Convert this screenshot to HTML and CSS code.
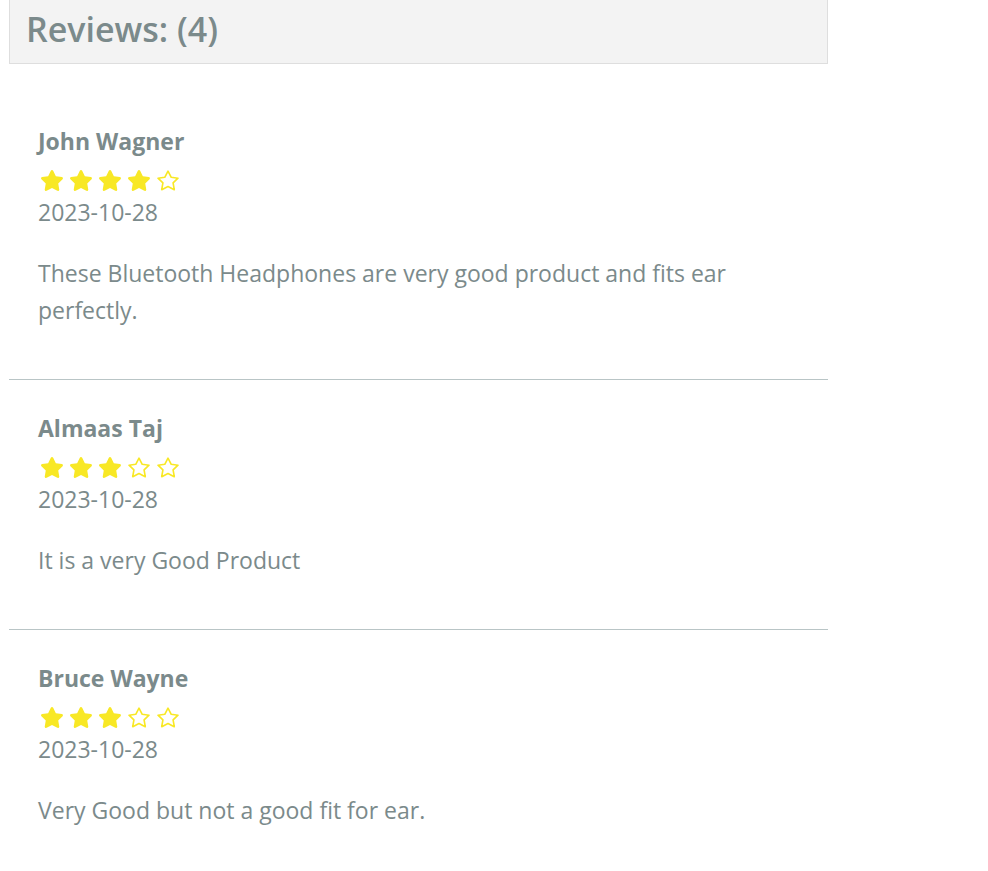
FILE: index.html
```html
<!DOCTYPE html>
<html>
<head>
<meta charset="utf-8">
<link rel="stylesheet" href="styles.css">
</head>
<body>
<div class="reviews">
  <h2 class="reviews-title">Reviews: (4)</h2>
  <div class="review">
    <strong class="review-name">John Wagner</strong>
    <div class="stars">
      <svg class="star" viewBox="0 0 576 512"><path d="M259.3 17.8L194 150.2 47.9 171.5c-26.2 3.8-36.7 36.1-17.7 54.6l105.7 103-25 145.5c-4.5 26.3 23.2 46 46.4 33.7L288 439.6l130.7 68.7c23.2 12.2 50.9-7.4 46.4-33.7l-25-145.5 105.7-103c19-18.5 8.5-50.8-17.7-54.6L382 150.2 316.7 17.8c-11.7-23.6-45.6-23.9-57.4 0z"/></svg>
      <svg class="star" viewBox="0 0 576 512"><path d="M259.3 17.8L194 150.2 47.9 171.5c-26.2 3.8-36.7 36.1-17.7 54.6l105.7 103-25 145.5c-4.5 26.3 23.2 46 46.4 33.7L288 439.6l130.7 68.7c23.2 12.2 50.9-7.4 46.4-33.7l-25-145.5 105.7-103c19-18.5 8.5-50.8-17.7-54.6L382 150.2 316.7 17.8c-11.7-23.6-45.6-23.9-57.4 0z"/></svg>
      <svg class="star" viewBox="0 0 576 512"><path d="M259.3 17.8L194 150.2 47.9 171.5c-26.2 3.8-36.7 36.1-17.7 54.6l105.7 103-25 145.5c-4.5 26.3 23.2 46 46.4 33.7L288 439.6l130.7 68.7c23.2 12.2 50.9-7.4 46.4-33.7l-25-145.5 105.7-103c19-18.5 8.5-50.8-17.7-54.6L382 150.2 316.7 17.8c-11.7-23.6-45.6-23.9-57.4 0z"/></svg>
      <svg class="star" viewBox="0 0 576 512"><path d="M259.3 17.8L194 150.2 47.9 171.5c-26.2 3.8-36.7 36.1-17.7 54.6l105.7 103-25 145.5c-4.5 26.3 23.2 46 46.4 33.7L288 439.6l130.7 68.7c23.2 12.2 50.9-7.4 46.4-33.7l-25-145.5 105.7-103c19-18.5 8.5-50.8-17.7-54.6L382 150.2 316.7 17.8c-11.7-23.6-45.6-23.9-57.4 0z"/></svg>
      <svg class="star star-empty" viewBox="0 0 576 512"><path d="M288 30 L367 178 L532 200 L412 316 L441 481 L288 403 L135 481 L164 316 L44 200 L209 178 Z"/></svg>
    </div>
    <p class="review-date">2023-10-28</p>
    <p class="review-text">These Bluetooth Headphones are very good product and fits ear perfectly.</p>
  </div>
  <div class="review">
    <strong class="review-name">Almaas Taj</strong>
    <div class="stars">
      <svg class="star" viewBox="0 0 576 512"><path d="M259.3 17.8L194 150.2 47.9 171.5c-26.2 3.8-36.7 36.1-17.7 54.6l105.7 103-25 145.5c-4.5 26.3 23.2 46 46.4 33.7L288 439.6l130.7 68.7c23.2 12.2 50.9-7.4 46.4-33.7l-25-145.5 105.7-103c19-18.5 8.5-50.8-17.7-54.6L382 150.2 316.7 17.8c-11.7-23.6-45.6-23.9-57.4 0z"/></svg>
      <svg class="star" viewBox="0 0 576 512"><path d="M259.3 17.8L194 150.2 47.9 171.5c-26.2 3.8-36.7 36.1-17.7 54.6l105.7 103-25 145.5c-4.5 26.3 23.2 46 46.4 33.7L288 439.6l130.7 68.7c23.2 12.2 50.9-7.4 46.4-33.7l-25-145.5 105.7-103c19-18.5 8.5-50.8-17.7-54.6L382 150.2 316.7 17.8c-11.7-23.6-45.6-23.9-57.4 0z"/></svg>
      <svg class="star" viewBox="0 0 576 512"><path d="M259.3 17.8L194 150.2 47.9 171.5c-26.2 3.8-36.7 36.1-17.7 54.6l105.7 103-25 145.5c-4.5 26.3 23.2 46 46.4 33.7L288 439.6l130.7 68.7c23.2 12.2 50.9-7.4 46.4-33.7l-25-145.5 105.7-103c19-18.5 8.5-50.8-17.7-54.6L382 150.2 316.7 17.8c-11.7-23.6-45.6-23.9-57.4 0z"/></svg>
      <svg class="star star-empty" viewBox="0 0 576 512"><path d="M288 30 L367 178 L532 200 L412 316 L441 481 L288 403 L135 481 L164 316 L44 200 L209 178 Z"/></svg>
      <svg class="star star-empty" viewBox="0 0 576 512"><path d="M288 30 L367 178 L532 200 L412 316 L441 481 L288 403 L135 481 L164 316 L44 200 L209 178 Z"/></svg>
    </div>
    <p class="review-date">2023-10-28</p>
    <p class="review-text">It is a very Good Product</p>
  </div>
  <div class="review">
    <strong class="review-name">Bruce Wayne</strong>
    <div class="stars">
      <svg class="star" viewBox="0 0 576 512"><path d="M259.3 17.8L194 150.2 47.9 171.5c-26.2 3.8-36.7 36.1-17.7 54.6l105.7 103-25 145.5c-4.5 26.3 23.2 46 46.4 33.7L288 439.6l130.7 68.7c23.2 12.2 50.9-7.4 46.4-33.7l-25-145.5 105.7-103c19-18.5 8.5-50.8-17.7-54.6L382 150.2 316.7 17.8c-11.7-23.6-45.6-23.9-57.4 0z"/></svg>
      <svg class="star" viewBox="0 0 576 512"><path d="M259.3 17.8L194 150.2 47.9 171.5c-26.2 3.8-36.7 36.1-17.7 54.6l105.7 103-25 145.5c-4.5 26.3 23.2 46 46.4 33.7L288 439.6l130.7 68.7c23.2 12.2 50.9-7.4 46.4-33.7l-25-145.5 105.7-103c19-18.5 8.5-50.8-17.7-54.6L382 150.2 316.7 17.8c-11.7-23.6-45.6-23.9-57.4 0z"/></svg>
      <svg class="star" viewBox="0 0 576 512"><path d="M259.3 17.8L194 150.2 47.9 171.5c-26.2 3.8-36.7 36.1-17.7 54.6l105.7 103-25 145.5c-4.5 26.3 23.2 46 46.4 33.7L288 439.6l130.7 68.7c23.2 12.2 50.9-7.4 46.4-33.7l-25-145.5 105.7-103c19-18.5 8.5-50.8-17.7-54.6L382 150.2 316.7 17.8c-11.7-23.6-45.6-23.9-57.4 0z"/></svg>
      <svg class="star star-empty" viewBox="0 0 576 512"><path d="M288 30 L367 178 L532 200 L412 316 L441 481 L288 403 L135 481 L164 316 L44 200 L209 178 Z"/></svg>
      <svg class="star star-empty" viewBox="0 0 576 512"><path d="M288 30 L367 178 L532 200 L412 316 L441 481 L288 403 L135 481 L164 316 L44 200 L209 178 Z"/></svg>
    </div>
    <p class="review-date">2023-10-28</p>
    <p class="review-text">Very Good but not a good fit for ear.</p>
  </div>
</div>
</body>
</html>
```
FILE: styles.css
```css
html, body {
  margin: 0;
  padding: 0;
  background: #ffffff;
}
body {
  font-family: "Open Sans", "Noto Sans", sans-serif;
  color: #7b8a8b;
}
.reviews {
  width: 819px;
  margin-left: 9px;
}
.reviews-title {
  margin: 0 0 29px 0;
  height: 63px;
  box-sizing: content-box;
  background: #f3f3f3;
  border: 1px solid #dedede;
  border-top: none;
  padding: 0 0 0 16px;
  font-size: 34px;
  font-weight: 600;
  line-height: 58px;
  color: #7b8a8b;
}
.review {
  padding: 33px 29px 50px;
  border-bottom: 1px solid #b9c5c6;
}
.review:last-child {
  border-bottom: none;
}
.review-name {
  display: block;
  font-size: 23px;
  font-weight: 700;
  line-height: 30px;
}
.stars {
  display: flex;
  gap: 5px;
  margin: 14px 0 0 2px;
}
.star {
  width: 24px;
  height: 21px;
  fill: #f8e825;
  overflow: visible;
}
.star-empty {
  fill: none;
  stroke: #f8e825;
  stroke-width: 40;
  stroke-linejoin: round;
}
.review-date {
  margin: 3px 0 0;
  font-size: 23px;
  line-height: 36px;
}
.review-text {
  margin: 25px 0 0;
  font-size: 23px;
  line-height: 37px;
}
```
